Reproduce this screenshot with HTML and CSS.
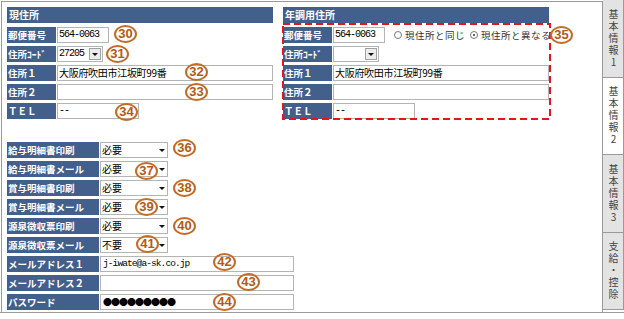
FILE: index.html
```html
<!DOCTYPE html>
<html lang="ja">
<head>
<meta charset="utf-8">
<link rel="stylesheet" href="styles.css">
</head>
<body>
<div class="frame">
  <div class="main">
    <div class="top">
      <section class="sec">
        <div class="hdr">現住所</div>
        <div class="row"><div class="lbl">郵便番号</div><div class="inp mono w-zip">564-0063</div></div>
        <div class="row"><div class="lbl">住所ｺｰﾄﾞ</div><div class="sel sel-box mono w-code"><span>27205</span><i class="btn"><b class="tri"></b></i></div></div>
        <div class="row"><div class="lbl">住所１</div><div class="inp addr grow">大阪府吹田市江坂町99番</div></div>
        <div class="row"><div class="lbl">住所２</div><div class="inp grow"></div></div>
        <div class="row"><div class="lbl tel">ＴＥＬ</div><div class="inp mono w-tel">--</div></div>
      </section>
      <section class="sec alt">
        <div class="hdr">年調用住所</div>
        <div class="row"><div class="lbl">郵便番号</div><div class="inp mono w-zip">564-0063</div>
          <div class="radios">
            <span class="rad"><i class="rb"></i>現住所と同じ</span>
            <span class="rad"><i class="rb on"></i>現住所と異なる</span>
          </div>
        </div>
        <div class="row"><div class="lbl">住所ｺｰﾄﾞ</div><div class="sel sel-box mono w-code"><span></span><i class="btn"><b class="tri"></b></i></div></div>
        <div class="row"><div class="lbl">住所１</div><div class="inp addr grow">大阪府吹田市江坂町99番</div></div>
        <div class="row"><div class="lbl">住所２</div><div class="inp grow"></div></div>
        <div class="row"><div class="lbl tel">ＴＥＬ</div><div class="inp mono w-tel">--</div></div>
        <svg class="dash" width="270" height="98" viewBox="0 0 270 98"><rect x="1" y="1" width="267" height="95" fill="none" stroke="#e3161c" stroke-width="2" stroke-dasharray="7 4"/></svg>
      </section>
    </div>
    <div class="bottom">
      <div class="row"><div class="lbl wide">給与明細書印刷</div><div class="sel w-sel"><span>必要</span><i class="btn flat"><b class="tri"></b></i></div></div>
      <div class="row"><div class="lbl wide">給与明細書メール</div><div class="sel w-sel"><span>必要</span><i class="btn flat"><b class="tri"></b></i></div></div>
      <div class="row"><div class="lbl wide">賞与明細書印刷</div><div class="sel w-sel"><span>必要</span><i class="btn flat"><b class="tri"></b></i></div></div>
      <div class="row"><div class="lbl wide">賞与明細書メール</div><div class="sel w-sel"><span>必要</span><i class="btn flat"><b class="tri"></b></i></div></div>
      <div class="row"><div class="lbl wide">源泉徴収票印刷</div><div class="sel w-sel"><span>必要</span><i class="btn flat"><b class="tri"></b></i></div></div>
      <div class="row"><div class="lbl wide">源泉徴収票メール</div><div class="sel w-sel"><span>不要</span><i class="btn flat"><b class="tri"></b></i></div></div>
      <div class="row"><div class="lbl wide">メールアドレス１</div><div class="inp mono mail w-mail">j-iwate@a-sk.co.jp</div></div>
      <div class="row"><div class="lbl wide">メールアドレス２</div><div class="inp w-mail"></div></div>
      <div class="row"><div class="lbl wide">パスワード</div><div class="inp pw w-mail">●●●●●●●●●</div></div>
    </div>

    <span class="badge b30">30</span>
    <span class="badge b31">31</span>
    <span class="badge b32">32</span>
    <span class="badge b33">33</span>
    <span class="badge b34">34</span>
    <span class="badge b35">35</span>
    <span class="badge b36">36</span>
    <span class="badge b37">37</span>
    <span class="badge b38">38</span>
    <span class="badge b39">39</span>
    <span class="badge b40">40</span>
    <span class="badge b41">41</span>
    <span class="badge b42">42</span>
    <span class="badge b43">43</span>
    <span class="badge b44">44</span>
  </div>
  <nav class="tabs">
    <div class="tab t1"><span>基本情報1</span></div>
    <div class="tab t2 on"><span>基本情報2</span></div>
    <div class="tab t3"><span>基本情報3</span></div>
    <div class="tab t4"><span>支給・控除</span></div>
  </nav>
</div>
</body>
</html>
```
FILE: styles.css
```css
* { box-sizing: border-box; }
html, body { margin: 0; padding: 0; background: #fff; }
body {
  width: 624px; height: 319px; overflow: hidden;
  font-family: "Noto Sans CJK JP", "Liberation Sans", sans-serif;
  font-size: 10px; color: #000;
}
.frame {
  display: flex; width: 624px; height: 313px;
  border-bottom: 1px solid #9a9a9a;
}
.main {
  position: relative;
  margin: 1px 0 0 1px;
  width: 602px;
  border: 1px solid #9a9a9a; border-bottom: 0;
  padding: 5px 0 0 5px;
}
.top {
  display: grid;
  grid-template-columns: 266px 266px;
  column-gap: 10px;
}
.sec { position: relative; }
.hdr {
  height: 16px; line-height: 16px;
  background: #435f8c; color: #fff;
  font-weight: bold; font-size: 10px;
  padding-left: 2px; margin-bottom: 4px;
}
.row {
  display: flex; gap: 1px;
  height: 16px; margin-bottom: 3px;
  align-items: stretch;
}
.lbl {
  flex: none; width: 49px;
  background: #435f8c; color: #fff;
  font-weight: bold; font-size: 9.5px;
  line-height: 16px; padding-left: 1px;
  white-space: nowrap; overflow: hidden;
}
.lbl.wide { width: 92px; }
.inp {
  flex: none;
  border: 1px solid #b4b4b4; background: #fff;
  line-height: 14px; padding-left: 1px;
  white-space: nowrap; overflow: hidden;
  font-size: 10px;
}
.grow { flex: 1 1 auto; }
.mono {
  font-family: "Liberation Mono", "Noto Sans CJK JP", monospace;
  font-size: 10px; letter-spacing: -1px;
}
.addr { font-size: 10px; letter-spacing: -0.3px; line-height: 14px; }
.mail { font-size: 9.5px; letter-spacing: -0.9px; padding-left: 2px; }
.pw { font-size: 9px; letter-spacing: -1px; padding-left: 2px; line-height: 14px; }
.w-zip { width: 52px; }
.w-code { width: 46px; }
.w-tel { width: 82px; }
.w-sel { width: 68px; }
.w-mail { width: 194px; }

.sel {
  flex: none; display: flex; align-items: center;
  border: 1px solid #b4b4b4; background: #fff;
  padding-left: 1px; font-size: 10px;
}
.sel > span { flex: 1 1 auto; line-height: 14px; white-space: nowrap; }
.btn {
  flex: none; display: flex; align-items: center; justify-content: center;
  width: 12px; height: 12px; margin-right: 1px;
  border: 1px solid #a0a0a0; background: #ececec;
}
.btn.flat { border: 0; background: transparent; width: 9px; margin-right: 1px; }
.tri {
  width: 0; height: 0;
  border-left: 3px solid transparent;
  border-right: 3px solid transparent;
  border-top: 3px solid #111;
}

.radios { display: flex; align-items: center; margin-left: 8px; gap: 5px; }
.rad {
  display: flex; align-items: center; gap: 3px;
  font-size: 9.5px; letter-spacing: 0.5px; color: #333; white-space: nowrap;
}
.rb {
  width: 8px; height: 8px; border-radius: 50%;
  border: 1px solid #777; background: #fff;
  display: flex; align-items: center; justify-content: center;
}
.rb.on::after {
  content: ""; width: 2px; height: 2px; border-radius: 50%; background: #333;
}
.dash { position: absolute; left: -1px; top: 16px; }

.bottom { margin-top: 20px; }

.badge {
  position: absolute;
  width: 23px; height: 18px;
  border: 2px solid #c26c25; border-radius: 50%;
  color: #b35a14;
  font-family: "Liberation Sans", Arial, sans-serif;
  font-weight: bold; font-size: 13px; line-height: 14px;
  text-align: center; letter-spacing: 0;
}
.b30 { left: 112px; top: 23px; }
.b31 { left: 104px; top: 43px; }
.b32 { left: 183px; top: 61px; }
.b33 { left: 183px; top: 81px; }
.b34 { left: 113px; top: 101px; }
.b35 { left: 548px; top: 24px; }
.b36 { left: 171px; top: 137px; }
.b37 { left: 133px; top: 160px; }
.b38 { left: 171px; top: 177px; }
.b39 { left: 133px; top: 196px; }
.b40 { left: 171px; top: 215px; }
.b41 { left: 134px; top: 233px; }
.b42 { left: 211px; top: 251px; }
.b43 { left: 235px; top: 271px; }
.b44 { left: 211px; top: 291px; }

.tabs {
  width: 21px; display: flex; flex-direction: column;
  align-self: flex-start;
}
.tab {
  border-right: 1px solid #9a9a9a; border-bottom: 1px solid #9a9a9a;
  background: #e3e3e3; color: #444;
  display: flex; align-items: center; justify-content: center;
}
.tab.on { background: #fff; }
.tab span {
  writing-mode: vertical-rl; text-orientation: upright;
  font-size: 10px; letter-spacing: 2px; line-height: 12px;
}
.t1 { height: 78px; }
.t2 { height: 77px; }
.t3 { height: 78px; }
.t4 { height: 77px; }
```
